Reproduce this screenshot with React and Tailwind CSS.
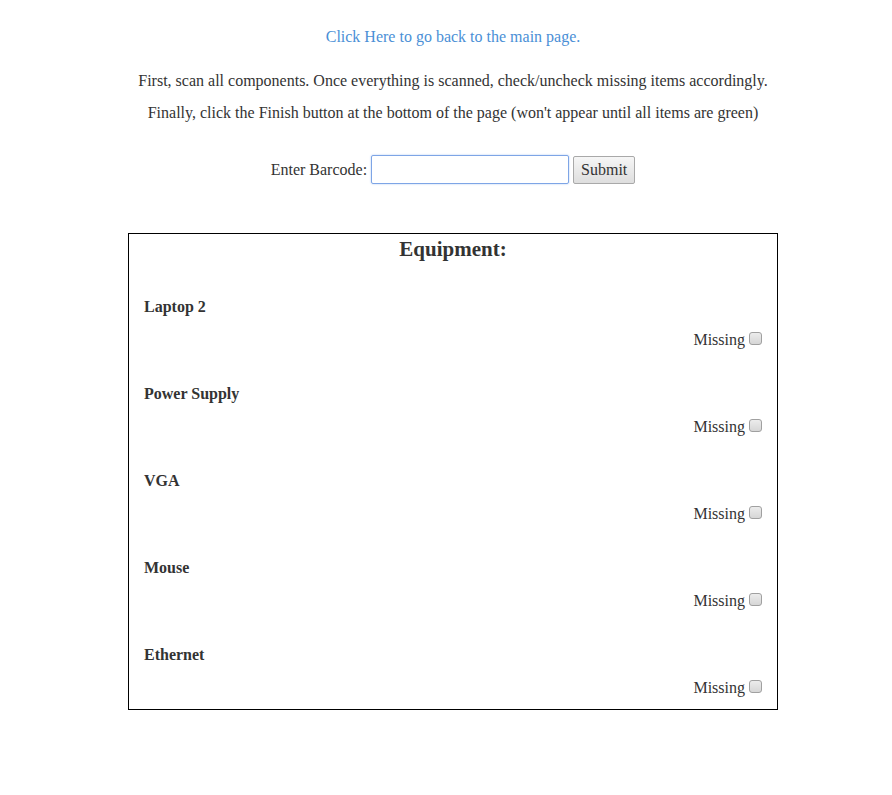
import React from 'react';

const items = ['Laptop 2', 'Power Supply', 'VGA', 'Mouse', 'Ethernet'];

export default function App() {
    return (
        <div className="min-h-[795px] bg-white text-[#333] text-[16px] font-['Liberation_Serif','Times_New_Roman',serif] pl-[14px]">
            <div className="flex flex-col items-center pt-[27px]">
                <a href="#" className="text-[#4a8fd6] leading-[20px]">Click Here to go back to the main page.</a>

                <p className="mt-[24px] leading-[20px]">
                    First, scan all components. Once everything is scanned, check/uncheck missing items accordingly.
                </p>
                <p className="mt-[12px] leading-[20px]">
                    Finally, click the Finish button at the bottom of the page (won't appear until all items are green)
                </p>

                {/* barcode form */}
                <form className="mt-[32px] flex items-center" onSubmit={(e) => e.preventDefault()}>
                    <label htmlFor="barcode" className="mr-[4px]">Enter Barcode:</label>
                    <input
                        id="barcode"
                        type="text"
                        className="w-[198px] h-[29px] border border-[#7ea5e6] rounded-[2px] px-1 outline-none shadow-[0_0_2px_#a9c4f0]"
                    />
                    <button className="ml-[4px] h-[28px] px-[7px] border border-[#a9a9a9] rounded-[2px] bg-gradient-to-b from-[#f6f6f6] to-[#dedede] text-[#333]">
                        Submit
                    </button>
                </form>

                {/* equipment list */}
                <div className="mt-[49px] w-[650px] border border-black px-[15px] pb-[11px]">
                    <h2 className="text-center font-bold text-[21px] leading-[28px] mt-[1px]">Equipment:</h2>
                    <div className="mt-[34px] flex flex-col gap-[34px]">
                        {items.map((name) => (
                            <div key={name}>
                                <div className="font-bold leading-[20px]">{name}</div>
                                <div className="flex justify-end items-center mt-[13px] leading-[20px]">
                                    <span>Missing</span>
                                    <input
                                        type="checkbox"
                                        className="appearance-none ml-[4px] w-[13px] h-[13px] -mt-[3px] border border-[#a0a0a0] rounded-[3px] bg-gradient-to-b from-[#ececec] to-[#d6d6d6]"
                                    />
                                </div>
                            </div>
                        ))}
                    </div>
                </div>
            </div>
        </div>
    );
}
